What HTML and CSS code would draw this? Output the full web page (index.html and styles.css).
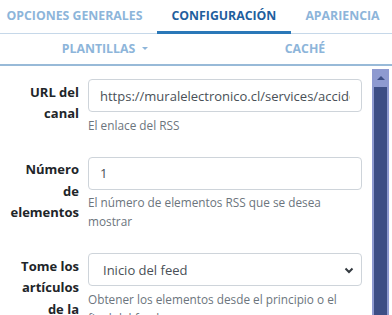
FILE: index.html
```
<!DOCTYPE html>
<html>
    <head>
        <meta charset="UTF-8">
        <link rel="stylesheet" href="styles.css">
        <title>Configuración del feed</title>
    </head>
    <body>
        <nav class="tabs">
            <a class="tab">OPCIONES GENERALES</a>
            <a class="tab active">CONFIGURACIÓN</a>
            <a class="tab">APARIENCIA</a>
        </nav>
        <nav class="subtabs">
            <a class="subtab first">PLANTILLAS<span class="caret"></span></a>
            <a class="subtab second">CACHÉ</a>
        </nav>
        <div class="panel">
            <form class="settings">
                <div class="row">
                    <label class="row-label">URL del canal</label>
                    <div class="row-field">
                        <input class="field" value="https://muralelectronico.cl/services/accidentes/rss">
                        <small class="help">El enlace del RSS</small>
                    </div>
                </div>
                <div class="row">
                    <label class="row-label">Número de elementos</label>
                    <div class="row-field">
                        <input class="field" value="1">
                        <small class="help">El número de elementos RSS que se desea mostrar</small>
                    </div>
                </div>
                <div class="row">
                    <label class="row-label">Tome los artículos de la fuente</label>
                    <div class="row-field">
                        <div class="select-wrap">
                            <select class="field select">
                                <option>Inicio del feed</option>
                                <option>Final del feed</option>
                            </select>
                            <svg class="chevron" width="10" height="7" viewBox="0 0 10 7">
                                <path d="M1.5 1.5 L5 5 L8.5 1.5" fill="none" stroke="#343a40" stroke-width="2"/>
                            </svg>
                        </div>
                        <small class="help">Obtener los elementos desde el principio o el final del feed</small>
                    </div>
                </div>
            </form>
            <div class="scrollbar">
                <span class="scroll-up"></span>
                <div class="scroll-thumb"></div>
            </div>
        </div>
    </body>
</html>
```
FILE: styles.css
```
html, body {
    margin: 0;
    height: 100%;
    overflow: hidden;
    background: #fff;
    font-family: "Open Sans", sans-serif;
}

/* top tabs */
.tabs {
    display: flex;
    justify-content: center;
    padding-right: 6px;
    height: 33px;
    border-bottom: 1px solid #c6d8e9;
}
.tab {
    flex-shrink: 0;
    white-space: nowrap;
    padding: 0 14.5px;
    line-height: 31px;
    font-size: 12.3px;
    font-weight: bold;
    color: #8db5da;
}
.tab.active {
    color: #1f5f9e;
    height: 31px;
    border-bottom: 3px solid #2a78b8;
}

/* second row */
.subtabs {
    display: flex;
    height: 30px;
    border-bottom: 2px solid #98bad8;
}
.subtab {
    line-height: 30px;
    font-size: 12.3px;
    font-weight: bold;
    color: #8db5da;
    text-align: center;
    white-space: nowrap;
}
.subtab.first {
    flex: 0 0 210px;
}
.subtab.second {
    flex: 1;
    padding-left: 8px;
}
.caret {
    display: inline-block;
    margin-left: 7px;
    vertical-align: 3px;
    border-top: 3px solid #8db5da;
    border-left: 3px solid transparent;
    border-right: 3px solid transparent;
}

/* content */
.panel {
    display: flex;
    height: calc(100% - 66px);
}
.settings {
    flex: 1;
    padding: 13px 10px 0 7px;
}
.row {
    display: flex;
    gap: 9px;
    margin-bottom: 22px;
}
.row-label {
    flex: 0 0 72px;
    padding-top: 2.5px;
    text-align: right;
    font-size: 13px;
    line-height: 21.5px;
    font-weight: bold;
    color: #212529;
}
.row-field {
    flex: 1;
    min-width: 0;
    display: flex;
    flex-direction: column;
}
.field {
    box-sizing: border-box;
    width: 100%;
    height: 33px;
    margin: 0;
    padding: 0 11px;
    border: 1px solid #ced4da;
    border-radius: 4px;
    background: #fff;
    font-family: "Open Sans", sans-serif;
    font-size: 13px;
    color: #495057;
    outline: none;
}
.select-wrap {
    position: relative;
}
.select {
    appearance: none;
    -webkit-appearance: none;
    padding-left: 14px;
}
.chevron {
    position: absolute;
    right: 8px;
    top: 14px;
}
.help {
    margin-top: 3.5px;
    font-size: 11.8px;
    line-height: 19px;
    color: #6c757d;
}

/* scrollbar */
.scrollbar {
    position: relative;
    flex: 0 0 17px;
    margin: 3px 3px 0 0;
    background: #8e9ad0;
}
.scroll-up {
    position: absolute;
    left: 5px;
    top: 7px;
    border-bottom: 4px solid #3d4e85;
    border-left: 4px solid transparent;
    border-right: 4px solid transparent;
}
.scroll-thumb {
    margin: 18px 2px 0 2px;
    height: 100%;
    background: #3d4e85;
}
```
